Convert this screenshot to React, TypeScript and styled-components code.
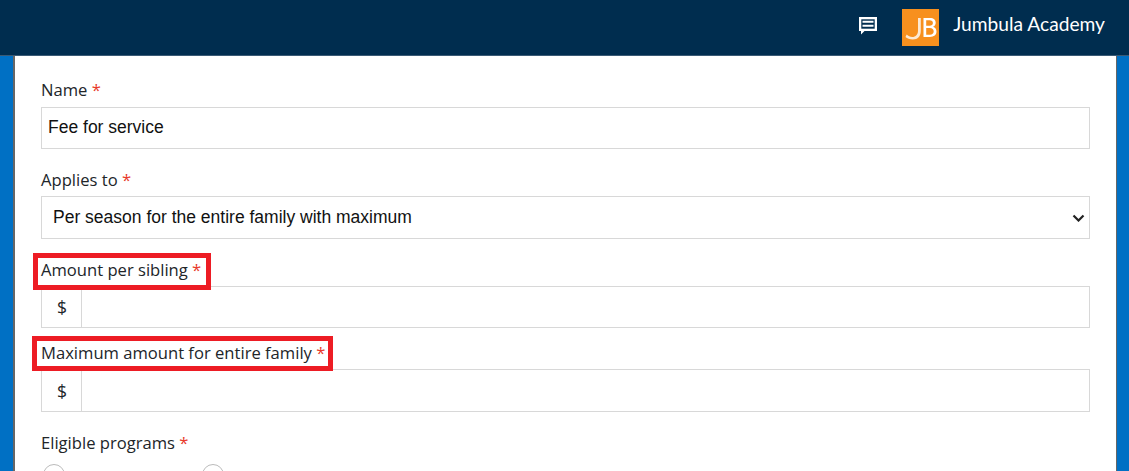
import React from "react";
import styled, { createGlobalStyle } from "styled-components";

const Global = createGlobalStyle`
  html, body { margin: 0; padding: 0; height: 471px; overflow: hidden; background: #0070c4; }
  #root { height: 471px; }
  * { box-sizing: border-box; }
`;

const Page = styled.div`
  display: flex;
  flex-direction: column;
  height: 471px;
  overflow: hidden;
  background: #0070c4;
`;

const Header = styled.header`
  flex: 0 0 56px;
  height: 56px;
  background: #002d4f;
  border-bottom: 1px solid #3a5a75;
  display: flex;
  align-items: center;
  justify-content: flex-end;
  padding: 0 24px 0 0;
`;

const ChatButton = styled.span`
  display: flex;
  width: 20px;
  height: 20px;
  margin-right: 24px;
  margin-bottom: 3px;
`;

const Logo = styled.span`
  display: flex;
  width: 37px;
  height: 37px;
  margin-right: 14px;
`;

const Brand = styled.span`
  font-family: "Lato", "Liberation Sans", sans-serif;
  font-size: 19.2px;
  color: #fff;
  white-space: nowrap;
  padding-bottom: 8px;
`;

const Shell = styled.div`
  flex: 1;
  padding: 0 12px 0 13px;
  min-height: 0;
`;

const Card = styled.main`
  height: 100%;
  background: #fff;
  border-left: 2px solid #666;
  border-right: 1px solid #666;
  padding: 22px 26px 0;
  overflow: hidden;
`;

const Field = styled.div<{ $gap: number }>`
  margin-bottom: ${(p) => p.$gap}px;
`;

const Label = styled.label<{ $shift?: boolean; $box?: { t: number; r: number; b: number; l: number } }>`
  position: relative;
  top: ${(p) => (p.$shift ? 1 : 0)}px;
  display: inline-block;
  font-family: "Open Sans", "Liberation Sans", sans-serif;
  font-size: 16.6px;
  line-height: 24px;
  color: #212529;
  margin-bottom: 5px;
  white-space: nowrap;
  ${(p) =>
    p.$box &&
    `
    &::after {
      content: "";
      position: absolute;
      left: ${p.$box.l}px;
      right: ${p.$box.r}px;
      top: ${p.$box.t}px;
      bottom: ${p.$box.b}px;
      border: 5px solid #ed1c24;
    }
  `}
`;

const Required = styled.span`
  color: #e8392a;
`;

const TextInput = styled.input`
  display: block;
  width: 100%;
  height: 42px;
  border: 1px solid #d8d8d8;
  padding: 0 6px 2px;
  font-family: "Liberation Sans", Arial, sans-serif;
  font-size: 17.5px;
  color: #111;
  background: #fff;
  outline: none;
  border-radius: 0;
`;

const SelectWrap = styled.div`
  position: relative;
`;

const SelectInput = styled.select`
  display: block;
  width: 100%;
  height: 43px;
  border: 1px solid #d8d8d8;
  padding: 0 24px 2px 11px;
  appearance: none;
  font-family: "Liberation Sans", Arial, sans-serif;
  font-size: 17.5px;
  color: #111;
  background: #fff;
  outline: none;
  border-radius: 0;
`;

const Chevron = styled.svg`
  position: absolute;
  right: 5px;
  top: 18px;
  pointer-events: none;
`;

const InputGroup = styled.div`
  display: flex;
  width: 100%;
`;

const Addon = styled.span`
  flex: 0 0 40px;
  display: flex;
  align-items: center;
  justify-content: center;
  padding-left: 1px;
  border: 1px solid #d8d8d8;
  border-right: 0;
  font-family: "Open Sans", "Liberation Sans", sans-serif;
  font-size: 17.5px;
  color: #212529;
`;

const GroupInput = styled(TextInput)<{ $h: number }>`
  flex: 1;
  height: ${(p) => p.$h}px;
`;

const RadioRow = styled.div`
  display: flex;
  gap: 137px;
  padding-left: 2px;
  margin-top: 5px;
`;

const Radio = styled.span`
  display: block;
  flex: none;
  width: 22px;
  height: 22px;
  border: 1px solid #bbb;
  border-radius: 50%;
  background: #fff;
`;

const ChatIcon = () => (
  <svg width="20" height="20" viewBox="0 0 20 20">
    <path d="M1 1h18v14H6.500l-3.500 3.500V15H1z" fill="#fff" />
    <path d="M3.300 3.300h13.400v9.400H3.300z" fill="#002d4f" />
    <path d="M4.500 4.800h11v2h-11zM4.500 8.800h11v2h-11z" fill="#fff" />
  </svg>
);

const LogoMark = () => (
  <svg width="37" height="37" viewBox="0 0 37 37">
    <rect width="37" height="37" fill="#f7901e" />
    <path d="M16 9h2.800v13c0 5-3 8.500-8 8.500-3 0-5.800-1-7.300-2.500l1.200-2.500c1.500 1.500 3.500 2.500 5.500 2.500 3.500 0 5.800-2.500 5.800-6.500z" fill="#fde9d2" />
    <path d="M21.500 9h6.500c3.700 0 5.700 1.900 5.700 4.700 0 1.900-1 3.400-2.700 4 2.300.6 3.500 2.400 3.500 4.900 0 3.500-2.500 5.400-6.700 5.400h-6.300zm2.700 2.300v5.400h3.400c2 0 3.300-1 3.300-2.700 0-1.800-1.300-2.700-3.300-2.700zm0 7.600v6.800h3.700c2.400 0 3.800-1.300 3.800-3.400 0-2.100-1.400-3.400-3.800-3.400z" fill="#fff" fillRule="evenodd" />
  </svg>
);

export default function App() {
  return (
    <Page>
      <Global />
      <Header>
        <ChatButton><ChatIcon /></ChatButton>
        <Logo><LogoMark /></Logo>
        <Brand>Jumbula Academy</Brand>
      </Header>
      <Shell>
        <Card>
          <Field $gap={18}>
            <Label>Name <Required>*</Required></Label>
            <TextInput defaultValue="Fee for service" />
          </Field>
          <Field $gap={18}>
            <Label $shift>Applies to <Required>*</Required></Label>
            <SelectWrap>
              <SelectInput defaultValue="a">
                <option value="a">Per season for the entire family with maximum</option>
              </SelectInput>
              <Chevron width="13" height="8" viewBox="0 0 13 8">
                <path d="M1.500 1.500l5 5 5-5" fill="none" stroke="#222" strokeWidth="2.200" />
              </Chevron>
            </SelectWrap>
          </Field>
          <Field $gap={12}>
            <Label $shift $box={{ t: -5, r: -10, b: -8, l: -8 }}>Amount per sibling <Required>*</Required></Label>
            <InputGroup>
              <Addon>$</Addon>
              <GroupInput $h={42} />
            </InputGroup>
          </Field>
          <Field $gap={18}>
            <Label $shift $box={{ t: -5, r: -8, b: -6, l: -9 }}>Maximum amount for entire family <Required>*</Required></Label>
            <InputGroup>
              <Addon>$</Addon>
              <GroupInput $h={43} />
            </InputGroup>
          </Field>
          <Field $gap={0}>
            <Label $shift>Eligible programs <Required>*</Required></Label>
            <RadioRow>
              <Radio />
              <Radio />
            </RadioRow>
          </Field>
        </Card>
      </Shell>
    </Page>
  );
}
